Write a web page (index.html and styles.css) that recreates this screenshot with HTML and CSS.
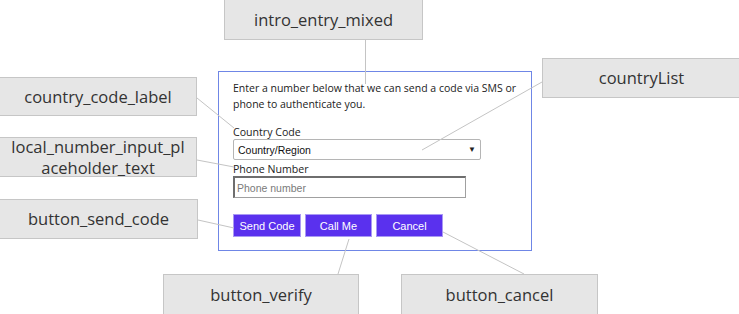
FILE: index.html
```html
<!DOCTYPE html>
<html>
<head>
<meta charset="utf-8">
<link rel="stylesheet" href="styles.css">
</head>
<body>
<div class="canvas">
  <svg class="wires" width="739" height="314" viewBox="0 0 739 314">
    <line x1="365.5" y1="40" x2="365.5" y2="84"/>
    <line x1="542" y1="82" x2="422" y2="150"/>
    <line x1="197" y1="98" x2="234" y2="128"/>
    <line x1="197" y1="160" x2="234" y2="167"/>
    <line x1="198" y1="220" x2="234" y2="228"/>
    <line x1="338" y1="274" x2="349" y2="239"/>
    <line x1="524" y1="274" x2="443" y2="232"/>
  </svg>

  <div class="form">
    <p class="intro">Enter a number below that we can send a code via SMS or phone to authenticate you.</p>
    <label class="lbl">Country Code</label>
    <div class="select"><span>Country/Region</span><span class="arrow">▼</span></div>
    <label class="lbl">Phone Number</label>
    <div class="input">Phone number</div>
    <div class="buttons">
      <div class="btn">Send Code</div>
      <div class="btn">Call Me</div>
      <div class="btn">Cancel</div>
    </div>
  </div>

  <div class="note n-intro">intro_entry_mixed</div>
  <div class="note n-list">countryList</div>
  <div class="note n-cc">country_code_label</div>
  <div class="note n-local">local_number_input_pl aceholder_text</div>
  <div class="note n-send">button_send_code</div>
  <div class="note n-verify">button_verify</div>
  <div class="note n-cancel">button_cancel</div>
</div>
</body>
</html>
```

FILE: styles.css
```css
html, body {
  margin: 0;
  padding: 0;
  background: #ffffff;
}

.canvas {
  position: relative;
  width: 739px;
  height: 314px;
  overflow: hidden;
}

.wires {
  position: absolute;
  left: 0;
  top: 0;
  z-index: 2;
  pointer-events: none;
}

.wires line {
  stroke: #c4c4c4;
  stroke-width: 1;
}

.form {
  position: absolute;
  left: 218px;
  top: 71px;
  width: 298px;
  height: 170px;
  border: 1px solid #6f86e6;
  padding: 8px 0 0 14px;
  display: flex;
  flex-direction: column;
  align-items: flex-start;
  font-family: "Open Sans", "Noto Sans", sans-serif;
  color: #222;
}

.intro {
  margin: 0;
  width: 292px;
  font-size: 10.5px;
  line-height: 16px;
}

.lbl {
  font-size: 10.6px;
  line-height: 14px;
  margin-top: 13px;
}

.select {
  box-sizing: border-box;
  width: 248px;
  height: 21px;
  border: 1px solid #b5b5b5;
  border-radius: 2px;
  display: flex;
  align-items: center;
  justify-content: space-between;
  padding: 0 4px 0 4px;
  font-family: "Liberation Sans", Arial, sans-serif;
  font-size: 10.5px;
  color: #111;
}

.arrow {
  font-size: 8px;
  color: #222;
}

.select + .lbl {
  margin-top: 2px;
}

.input {
  box-sizing: border-box;
  width: 233px;
  height: 22px;
  border: 1px solid #a0a0a0;
  border-top: 2px solid #6e6e6e;
  border-left: 2px solid #6e6e6e;
  padding-left: 2px;
  display: flex;
  align-items: center;
  font-family: "Liberation Sans", Arial, sans-serif;
  font-size: 10.5px;
  color: #7a7a7a;
}

.buttons {
  display: flex;
  gap: 4px;
  margin-top: 16px;
}

.btn {
  box-sizing: border-box;
  width: 68px;
  height: 23px;
  background: #5a31ee;
  border: 1px solid #a999f4;
  color: #ffffff;
  display: flex;
  align-items: center;
  justify-content: center;
  font-family: "Liberation Sans", Arial, sans-serif;
  font-size: 11px;
}

.btn + .btn {
  width: 67px;
}

.note {
  position: absolute;
  box-sizing: border-box;
  background: #e6e6e6;
  border: 1px solid #c6c6c6;
  color: #333;
  font-family: "Open Sans", "Noto Sans", sans-serif;
  font-size: 16.5px;
  line-height: 20px;
  display: flex;
  align-items: center;
  justify-content: center;
  text-align: center;
  z-index: 1;
}

.n-intro  { left: 224px; top: -1px;  width: 199px; height: 41px; }
.n-list   { left: 542px; top: 58px;  width: 199px; height: 40px; }
.n-cc     { left: -1px;  top: 77px;  width: 198px; height: 39px; }
.n-local  { left: -1px;  top: 137px; width: 198px; height: 40px; padding: 0 4px; line-height: 21px; }
.n-send   { left: -1px;  top: 199px; width: 199px; height: 40px; }
.n-verify { left: 163px; top: 274px; width: 196px; height: 41px; }
.n-cancel { left: 401px; top: 274px; width: 197px; height: 41px; }
```
